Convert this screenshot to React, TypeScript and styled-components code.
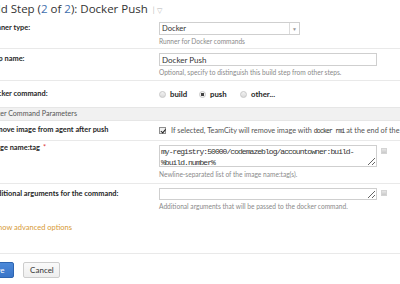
import React from "react";
import styled, { createGlobalStyle } from "styled-components";

const Global = createGlobalStyle`
  html, body { margin: 0; padding: 0; background: #fff; overflow: hidden; }
  body { font-family: Lato, "Open Sans", sans-serif; color: #333; }
`;

const Page = styled.div`
  width: 430px;
  margin-left: -10px;
`;

const TitleBar = styled.div`
  display: flex;
  align-items: center;
  height: 18px;
  margin-left: -33px;
  gap: 5px;
`;

const Title = styled.h1`
  margin: 0;
  font-family: "Open Sans", sans-serif;
  font-size: 11.5px;
  font-weight: 400;
  color: #333;
  white-space: nowrap;
  line-height: 16px;
`;

const Num = styled.span`
  color: #3f6fae;
`;

const TitleMenu = styled.span`
  display: flex;
  align-items: center;
  gap: 2px;
  color: #b5b5b5;
  font-size: 7px;
  margin-top: 2px;
`;

const Row = styled.div<{ $h: number; $line?: boolean }>`
  display: grid;
  grid-template-columns: 169px 1fr;
  min-height: ${(p) => p.$h}px;
  border-bottom: ${(p) => (p.$line ? "1px solid #e9e9e9" : "none")};
  box-sizing: border-box;
`;

const Label = styled.div<{ $top: number }>`
  font-size: 7.4px;
  font-weight: 700;
  color: #262626;
  padding-top: ${(p) => p.$top}px;
  margin-left: -2px;
  white-space: nowrap;
  line-height: 10px;
`;

const Req = styled.span`
  color: #d33;
  font-weight: 400;
  margin-left: 3px;
`;

const Value = styled.div<{ $top: number }>`
  padding-top: ${(p) => p.$top}px;
  display: flex;
  flex-direction: column;
  align-items: flex-start;
`;

const Hint = styled.div<{ $mt: number }>`
  font-size: 6.6px;
  line-height: 9px;
  color: #8a8a8a;
  margin-top: ${(p) => p.$mt}px;
  white-space: nowrap;
`;

const SelectBox = styled.div`
  width: 139px;
  height: 11px;
  border: 1px solid #cfcfcf;
  box-sizing: content-box;
  display: flex;
  font-size: 7.6px;
  color: #333;
`;

const SelectText = styled.div`
  flex: 1;
  padding-left: 2px;
  line-height: 11px;
`;

const SelectArrow = styled.div`
  width: 9px;
  border-left: 1px solid #dcdcdc;
  color: #999;
  font-size: 5px;
  display: flex;
  align-items: center;
  justify-content: center;
`;

const TextInput = styled.input`
  width: 218px;
  height: 13px;
  border: 1px solid #cfcfcf;
  box-sizing: border-box;
  padding: 0 2px;
  margin: 0;
  font-family: Lato, "Open Sans", sans-serif;
  font-size: 8px;
  color: #333;
  outline: none;
`;

const Radios = styled.div`
  display: flex;
  align-items: center;
  height: 10px;
`;

const RadioItem = styled.span<{ $w: number }>`
  display: flex;
  align-items: center;
  gap: 4px;
  width: ${(p) => p.$w}px;
  font-size: 7.8px;
  font-weight: 700;
  color: #262626;
`;

const RadioDot = styled.span<{ $on?: boolean }>`
  width: 7px;
  height: 7px;
  border-radius: 50%;
  box-sizing: border-box;
  border: 1px solid #c8c8c8;
  background: ${(p) =>
    p.$on
      ? "radial-gradient(circle, #444 0 1.6px, #f4f4f4 2px)"
      : "linear-gradient(#f3f3f3, #dadada)"};
`;

const Section = styled.div`
  height: 12px;
  background: #f1f1f1;
  border-top: 1px solid #e6e6e6;
  border-bottom: 1px solid #e6e6e6;
  font-size: 7.1px;
  color: #555;
  line-height: 12px;
  white-space: nowrap;
  text-indent: -6px;
`;

const CheckLine = styled.div`
  display: flex;
  align-items: center;
  gap: 5px;
  font-size: 7.3px;
  color: #555;
  white-space: nowrap;
`;

const Check = styled.span`
  width: 7px;
  height: 7px;
  box-sizing: border-box;
  border: 1px solid #8f8f8f;
  background: #f0f0f0;
  position: relative;
  flex: none;
  &::after {
    content: "";
    position: absolute;
    left: 1.5px;
    top: -0.5px;
    width: 1.5px;
    height: 3.5px;
    border: solid #222;
    border-width: 0 1.3px 1.3px 0;
    transform: rotate(40deg);
  }
`;

const Code = styled.span`
  font-family: "Liberation Mono", monospace;
  font-size: 6.6px;
  letter-spacing: -0.9px;
  color: #333;
`;

const AreaRow = styled.div`
  display: flex;
  align-items: flex-start;
  gap: 4px;
`;

const Area = styled.textarea<{ $h: number }>`
  width: 218px;
  height: ${(p) => p.$h}px;
  border: 1px solid #cfcfcf;
  box-sizing: border-box;
  margin: 0;
  padding: 0 1px;
  font-family: "Liberation Mono", monospace;
  font-size: 8px;
  letter-spacing: -0.95px;
  line-height: 11px;
  color: #333;
  resize: vertical;
  overflow: hidden;
  outline: none;
`;

const ParamIcon = styled.span<{ $mt: number }>`
  width: 6px;
  height: 6px;
  margin-top: ${(p) => p.$mt}px;
  background: linear-gradient(#e6e6e6, #c9c9c9);
  border: 1px solid #d4d4d4;
  box-sizing: border-box;
`;

const Advanced = styled.div`
  height: 38px;
  border-bottom: 1px solid #e9e9e9;
  box-sizing: border-box;
  padding-top: 7px;
  font-size: 7.5px;
  color: #d79a36;
  margin-left: 4px;
`;

const Buttons = styled.div`
  display: flex;
  gap: 9px;
  padding-top: 8px;
  margin-left: -12px;
`;

const Button = styled.button<{ $primary?: boolean }>`
  height: 16px;
  box-sizing: border-box;
  padding: 0 9px;
  border-radius: 2px;
  font-family: Lato, "Open Sans", sans-serif;
  font-size: 8px;
  line-height: 14px;
  border: 1px solid ${(p) => (p.$primary ? "#2d64b0" : "#cdcdcd")};
  background: ${(p) =>
    p.$primary ? "linear-gradient(#4c89d9, #3a75c8)" : "linear-gradient(#fafafa, #eeeeee)"};
  color: ${(p) => (p.$primary ? "#fff" : "#333")};
`;

const CancelButton = styled(Button)`
  width: 37px;
  padding: 0;
`;

export default function App() {
  return (
    <>
      <Global />
      <Page>
        <TitleBar>
          <Title>
            Edit Build Step (<Num>2</Num> of <Num>2</Num>): Docker Push
          </Title>
          <TitleMenu>
            <span>|</span>
            <span>▽</span>
          </TitleMenu>
        </TitleBar>

        <Row $h={31} $line>
          <Label $top={5}>Runner type:</Label>
          <Value $top={4}>
            <SelectBox>
              <SelectText>Docker</SelectText>
              <SelectArrow>▼</SelectArrow>
            </SelectBox>
            <Hint $mt={2}>Runner for Docker commands</Hint>
          </Value>
        </Row>

        <Row $h={32} $line>
          <Label $top={5}>Step name:</Label>
          <Value $top={4}>
            <TextInput defaultValue="Docker Push" />
            <Hint $mt={2}>Optional, specify to distinguish this build step from other steps.</Hint>
          </Value>
        </Row>

        <Row $h={26}>
          <Label $top={8}>Docker command:</Label>
          <Value $top={8}>
            <Radios>
              <RadioItem $w={40}>
                <RadioDot />
                build
              </RadioItem>
              <RadioItem $w={41}>
                <RadioDot $on />
                push
              </RadioItem>
              <RadioItem $w={40}>
                <RadioDot />
                other...
              </RadioItem>
            </Radios>
          </Value>
        </Row>

        <Section>Docker Command Parameters</Section>

        <Row $h={20} $line>
          <Label $top={4}>Remove image from agent after push</Label>
          <Value $top={5}>
            <CheckLine>
              <Check />
              <span>
                If selected, TeamCity will remove image with <Code>docker rmi</Code> at the end of the build.
              </span>
            </CheckLine>
          </Value>
        </Row>

        <Row $h={43} $line>
          <Label $top={2}>
            Image name:tag<Req>*</Req>
          </Label>
          <Value $top={4}>
            <AreaRow>
              <Area
                $h={22}
                defaultValue={"my-registry:50000/codemazeblog/accountowner:build-\n%build.number%"}
              />
              <ParamIcon $mt={3} />
            </AreaRow>
            <Hint $mt={3}>Newline-separated list of the image name:tag(s).</Hint>
          </Value>
        </Row>

        <Row $h={32}>
          <Label $top={5}>Additional arguments for the command:</Label>
          <Value $top={4}>
            <AreaRow>
              <Area $h={12} defaultValue="" />
              <ParamIcon $mt={2} />
            </AreaRow>
            <Hint $mt={2}>Additional arguments that will be passed to the docker command.</Hint>
          </Value>
        </Row>

        <Advanced>Show advanced options</Advanced>

        <Buttons>
          <Button $primary>Save</Button>
          <CancelButton>Cancel</CancelButton>
        </Buttons>
      </Page>
    </>
  );
}
